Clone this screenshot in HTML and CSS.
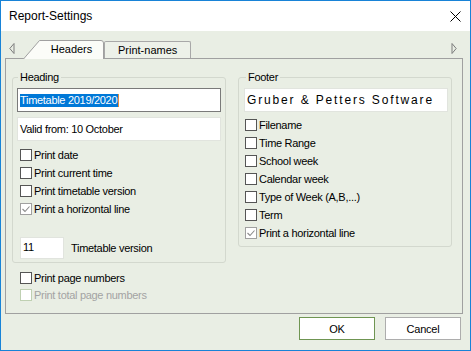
FILE: index.html
```html
<!DOCTYPE html>
<html lang="en">
  <head>
    <meta charset="UTF-8" />
    <title>Report-Settings</title>
    <link rel="stylesheet" href="styles.css">
  </head>
  <body>
    <div class="window">
      <div class="titlebar">
        <span class="title">Report-Settings</span>
        <svg class="close" width="11" height="11" viewBox="0 0 11 11">
          <path d="M0.5 0.5 L10.5 10.5 M10.5 0.5 L0.5 10.5" stroke="#000" stroke-width="1" fill="none" />
        </svg>
      </div>

      <div class="content">
        <div class="tabstrip">
          <svg class="scroll left" width="6" height="11" viewBox="0 0 6 11">
            <path d="M5 0.5 L0.8 5.5 L5 10.5 Z" fill="none" stroke="#7c7c7c" />
          </svg>
          <div class="tab active">
            <svg class="tab-shape" width="81" height="19" viewBox="0 0 81 19">
              <path d="M0.5 19 L16.5 0.5 H78 Q80.5 0.5 80.5 3 V19" fill="#fbfcf8" stroke="#a0a0a0" />
            </svg>
            <span>Headers</span>
          </div>
          <div class="tab">Print-names</div>
          <svg class="scroll right" width="6" height="11" viewBox="0 0 6 11">
            <path d="M1 0.5 L5.2 5.5 L1 10.5 Z" fill="none" stroke="#7c7c7c" />
          </svg>
        </div>

        <div class="panel">
          <div class="column">
            <fieldset class="group heading">
              <legend>Heading</legend>
              <div class="field focused"><span class="selected">Timetable 2019/2020</span><span class="caret"></span></div>
              <div class="field">Valid from: 10 October</div>
              <div class="checks">
                <div class="check"><span class="box"></span>Print date</div>
                <div class="check"><span class="box"></span>Print current time</div>
                <div class="check"><span class="box"></span>Print timetable version</div>
                <div class="check checked"><span class="box"><svg width="10" height="10" viewBox="0 0 10 10"><path d="M1.5 5 L4 7.5 L8.5 2.5" fill="none" stroke="#8a8a8a" stroke-width="1.1" /></svg></span>Print a horizontal line</div>
              </div>
              <div class="version">
                <div class="field small">11</div>
                <span>Timetable version</span>
              </div>
            </fieldset>
            <div class="checks outside">
              <div class="check"><span class="box"></span>Print page numbers</div>
              <div class="check disabled"><span class="box"></span>Print total page numbers</div>
            </div>
          </div>

          <div class="column">
            <fieldset class="group footer">
              <legend>Footer</legend>
              <div class="field spaced">Gruber &amp; Petters Software</div>
              <div class="checks">
                <div class="check"><span class="box"></span>Filename</div>
                <div class="check"><span class="box"></span>Time Range</div>
                <div class="check"><span class="box"></span>School week</div>
                <div class="check"><span class="box"></span>Calendar week</div>
                <div class="check"><span class="box"></span>Type of Week (A,B,...)</div>
                <div class="check"><span class="box"></span>Term</div>
                <div class="check checked"><span class="box"><svg width="10" height="10" viewBox="0 0 10 10"><path d="M1.5 5 L4 7.5 L8.5 2.5" fill="none" stroke="#8a8a8a" stroke-width="1.1" /></svg></span>Print a horizontal line</div>
              </div>
            </fieldset>
          </div>
        </div>

        <div class="buttons">
          <button class="button default">OK</button>
          <button class="button">Cancel</button>
        </div>
      </div>
    </div>
  </body>
</html>
```

FILE: styles.css
```css
* {
  box-sizing: border-box;
}

body {
  margin: 0;
  font-family: "Liberation Sans", Arial, sans-serif;
  font-size: 11px;
  color: #000;
}

.window {
  width: 471px;
  height: 351px;
  border: 1px solid #1883d7;
  display: flex;
  flex-direction: column;
  background: #e9eee4;
}

.titlebar {
  height: 30px;
  background: #fff;
  display: flex;
  align-items: center;
  justify-content: space-between;
  padding: 0 9px 0 8px;
}
.title {
  font-size: 12px;
}
.close {
  display: block;
  margin-top: 1px;
}

.content {
  flex: 1;
  display: flex;
  flex-direction: column;
}

.tabstrip {
  height: 27px;
  display: flex;
  align-items: flex-end;
  padding: 0 0 0 8px;
}
.scroll {
  display: block;
  align-self: flex-start;
  margin-top: 12px;
}
.scroll.left {
  margin-right: 8px;
}
.scroll.right {
  margin-left: auto;
  margin-right: 13px;
}

.tab {
  height: 17px;
  line-height: 16px;
  padding: 0 13px 0 13px;
  border: 1px solid #a8a8a8;
  border-bottom: none;
  border-radius: 2px 2px 0 0;
  background: #edf1e9;
}
.tab.active {
  position: relative;
  width: 81px;
  height: 19px;
  margin-bottom: -1px;
  padding: 0 0 0 16px;
  border: none;
  background: none;
  text-align: center;
  line-height: 18px;
}
.tab.active span {
  position: relative;
}
.tab-shape {
  position: absolute;
  left: 0;
  top: 0;
}

.panel {
  height: 256px;
  margin: 0 7px 0 4px;
  border: 1px solid #a0a0a0;
  padding: 12px 6px 0;
  display: flex;
  gap: 12px;
  letter-spacing: -0.3px;
}
.column {
  width: 214px;
}

.group {
  margin: 0;
  min-width: 0;
  border: 1px solid #d3d8ce;
  border-radius: 3px;
  padding: 0 4px 3px;
}
.group legend {
  padding: 0 2px;
  margin-left: 1px;
  line-height: 13px;
}
.group.footer {
  padding: 0 3px 4px 5px;
}
.footer legend {
  margin-left: 2px;
}

.field {
  height: 24px;
  line-height: 22px;
  padding: 0 2px;
  background: #fff;
  border: 1px solid #e1e4de;
  white-space: nowrap;
  margin-top: 5px;
}
.field.focused {
  margin-top: 4px;
  border-color: #7a7a7a;
  display: flex;
  align-items: center;
}
.selected {
  background: #0078d7;
  color: #fff;
  line-height: 13px;
  padding-right: 1px;
}
.caret {
  width: 1px;
  height: 13px;
  background: #e38b3c;
}
.field.spaced {
  margin-top: 4px;
  font-size: 12px;
  letter-spacing: 1.85px;
}
.field.small {
  width: 44px;
  height: 22px;
  line-height: 18px;
  margin: 0;
}

.checks {
  margin-top: 5px;
}
.footer .checks {
  margin-top: 4px;
}
.check {
  height: 18px;
  display: flex;
  align-items: center;
  padding-left: 3px;
  white-space: nowrap;
}
.footer .check {
  padding-left: 1px;
}
.box {
  width: 12px;
  height: 12px;
  margin-right: 2px;
  border: 1px solid #555;
  background: #fff;
  display: flex;
  align-items: center;
  justify-content: center;
}
.checked .box {
  border-color: #a0a0a0;
}
.disabled {
  color: #a3a3a3;
}
.disabled .box {
  border-color: #bfd0b2;
}

.version {
  display: flex;
  align-items: center;
  gap: 7px;
  margin: 19px 0 0 3px;
}

.checks.outside {
  margin-top: 6px;
}
.checks.outside .check {
  padding-left: 8px;
  height: 17px;
}

.buttons {
  display: flex;
  justify-content: flex-end;
  gap: 10px;
  padding: 3px 9px 0 0;
}
.button {
  width: 76px;
  height: 23px;
  background: #fff;
  border: 1px solid #adadad;
  font-family: "Liberation Sans", Arial, sans-serif;
  font-size: 11px;
  letter-spacing: -0.2px;
  color: #000;
  padding: 0;
}
.button.default {
  border-color: #6f9552;
}
```
